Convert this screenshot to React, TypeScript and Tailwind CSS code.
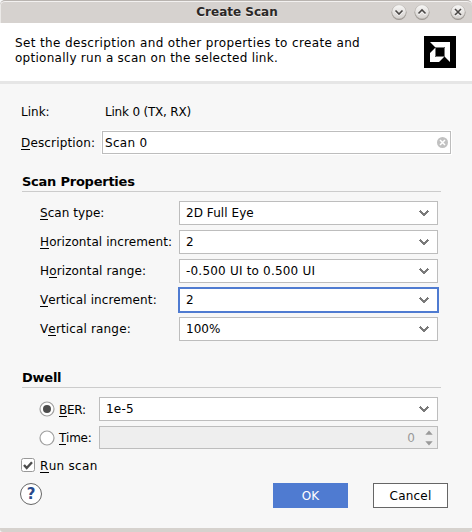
import React from "react";

function Chevron() {
  return (
    <svg className="mr-[8px] shrink-0" width="10" height="6" viewBox="0 0 10 6" shapeRendering="crispEdges">
      <path d="M1 0h1v1h1v1h1v1h2v-1h1v-1h1v-1h1v1h1v1h-1v1h-1v1h-1v1h-1v1h-2v-1h-1v-1h-1v-1h-1v-1h-1v-1h1z" fill="#7a7a7a" />
    </svg>
  );
}

function Combo({ value, focused, className = "", text = "" }: { value: string; focused?: boolean; className?: string; text?: string }) {
  return (
    <div
      className={`flex shrink-0 items-center justify-between bg-white ${
        focused ? "-mx-px h-[26px] border-2 border-[#4f7bd1] pl-[6px]" : "h-[24px] border border-[#bdbdbd] pl-[6px]"
      } ${className}`}
    >
      <span className={`leading-[22px] ${text}`}>{value}</span>
      <Chevron />
    </div>
  );
}

function U({ children }: { children: React.ReactNode }) {
  return <span className="inline-block h-[14px] border-b border-black leading-[14px]">{children}</span>;
}

function Heading({ children, className }: { children: React.ReactNode; className: string }) {
  return (
    <div className={`ml-[22px] w-[419px] border-b border-[#cccccc] text-[13px] font-bold leading-[18px] tracking-[-0.24px] ${className}`}>
      {children}
    </div>
  );
}

function WindowButton({ d }: { d: string }) {
  return (
    <svg width="16" height="16" viewBox="0 0 16 16">
      <defs>
        <linearGradient id="knob" x1="0" y1="0" x2="0" y2="1">
          <stop offset="0" stopColor="#f8f7f6" />
          <stop offset="1" stopColor="#d5d1ce" />
        </linearGradient>
      </defs>
      <circle cx="8" cy="8.4" r="7.5" fill="#99948f" />
      <circle cx="8" cy="7.8" r="7" fill="url(#knob)" stroke="#bdb8b4" strokeWidth=".5" />
      <path d={d} fill="none" stroke="#fff" strokeWidth="1.5" transform="translate(0 1)" />
      <path d={d} fill="none" stroke="#4a4745" strokeWidth="1.6" />
    </svg>
  );
}

function Radio({ checked }: { checked?: boolean }) {
  return (
    <svg className="shrink-0" width="16" height="16" viewBox="0 0 16 16">
      <circle cx="8" cy="8" r="7" fill="#fff" stroke="#a0a0a0" strokeWidth="1.2" />
      {checked && <circle cx="8" cy="8" r="4" fill="#4d4d4d" />}
    </svg>
  );
}

export default function App() {
  return (
    <div className="flex h-[532px] w-[472px] flex-col overflow-hidden bg-[#f7f7f7] font-['DejaVu_Sans',sans-serif] text-[12px] text-black whitespace-nowrap">
      <div className="relative flex h-[23px] shrink-0 items-center justify-center rounded-t-[5px] border-t border-[#b9b4b0] bg-[#d6d2cf] shadow-[inset_0_1px_0_#f3f1f0,inset_1px_0_0_#eceae8]">
        <span className="pl-[2px] text-[12px] font-bold text-[#2b2827] [text-shadow:0_1px_0_#efedec]">Create Scan</span>
        <div className="absolute top-[3px] right-[6px] flex">
          <WindowButton d="M4.5 6.5l3.5 3.5 3.5-3.5" />
          <div className="w-[7px]" />
          <WindowButton d="M4.5 9.5l3.5-3.5 3.5 3.5" />
          <div className="w-[20px]" />
          <WindowButton d="M5 5l6 6M11 5l-6 6" />
        </div>
      </div>

      <div className="flex h-[58px] shrink-0 justify-between bg-white pl-[15px] pr-[16px] pt-[13px]">
        <p className="leading-[15px]">
          <span className="tracking-[0.37px]">Set the description and other properties to create and</span>
          <br />
          <span className="tracking-[0.27px]">optionally run a scan on the selected link.</span>
        </p>
        <svg width="32" height="32" viewBox="0 0 32 32">
          <path d="M0 0h32v32H0z" fill="#000" />
          <path d="M6 6h20v20l-5-5v-10h-10z" fill="#fff" />
          <path d="M11 12v9h9l-5 5H6v-9z" fill="#fff" />
          <path d="M11.5 11.5h9v9h-9z" fill="none" stroke="#777" strokeWidth="1" />
        </svg>
      </div>
      <div className="h-[3px] shrink-0 bg-[#e6e6e6]" />

      <div className="flex min-h-0 flex-1 flex-col">
        <div className="mt-[20px] flex h-[16px] pl-[21px] leading-[16px]">
          <span className="w-[84px]">Link:</span>
          <span className="tracking-[-0.2px]">Link 0 (TX, RX)</span>
        </div>
        <div className="mt-[11px] flex h-[23px] items-center pl-[21px]">
          <span className="w-[81px] tracking-[0.16px]"><U>D</U>escription:</span>
          <div className="flex h-[23px] w-[349px] items-center justify-between border border-[#bdbdbd] bg-white pl-[2px] pr-[2px] shadow-[0_0_0_1px_#ffffff]">
            <span className="tracking-[0.28px]">Scan 0</span>
            <svg width="11" height="11" viewBox="0 0 11 11">
              <circle cx="5.5" cy="5.5" r="5.5" fill="#c1c1c1" />
              <path d="M3 3l5 5M8 3l-5 5" stroke="#fff" strokeWidth="1.5" />
            </svg>
          </div>
        </div>

        <Heading className="mt-[19px]">Scan Properties</Heading>

        <div className="mt-[9px] flex flex-col gap-[5px] pl-[40px]">
          <div className="flex h-[24px] items-center">
            <span className="w-[139px] tracking-[0.06px]"><U>S</U>can type:</span>
            <Combo value="2D Full Eye" className="w-[259px]" text="tracking-[0.06px]" />
          </div>
          <div className="flex h-[24px] items-center">
            <span className="w-[139px] tracking-[0.1px]"><U>H</U>orizontal increment:</span>
            <Combo value="2" className="w-[259px]" />
          </div>
          <div className="flex h-[24px] items-center">
            <span className="w-[139px] tracking-[0.13px]">H<U>o</U>rizontal range:</span>
            <Combo value="-0.500 UI to 0.500 UI" className="w-[259px]" text="tracking-[0.2px]" />
          </div>
          <div className="flex h-[24px] items-center">
            <span className="w-[139px] tracking-[0.11px]"><U>V</U>ertical increment:</span>
            <Combo value="2" focused className="w-[261px]" />
          </div>
          <div className="flex h-[24px] items-center">
            <span className="w-[139px] tracking-[0.15px]">V<U>e</U>rtical range:</span>
            <Combo value="100%" className="w-[259px]" />
          </div>
        </div>

        <Heading className="mt-[28px]">Dwell</Heading>

        <div className="mt-[9px] flex h-[24px] items-center pl-[39px]">
          <Radio checked />
          <span className="ml-[4px] w-[40px] pt-px tracking-[-0.3px]"><U>B</U>ER:</span>
          <Combo value="1e-5" className="w-[339px]" text="tracking-[0.2px]" />
        </div>
        <div className="mt-[5px] flex h-[23px] items-center pl-[39px]">
          <Radio />
          <span className="ml-[4px] w-[40px] tracking-[-0.25px]"><U>T</U>ime:</span>
          <div className="flex h-[23px] w-[339px] items-center justify-end border border-[#bdbdbd] bg-[#eeeeee] pr-[4px] text-[#999999]">
            <span>0</span>
            <svg className="ml-[10px]" width="8" height="16" viewBox="0 0 8 16">
              <path d="M4 0.5l3.7 4.2H.3zM4 15.5l3.7-4.2H.3z" fill="#999" />
            </svg>
          </div>
        </div>

        <div className="mt-[9px] flex h-[14px] items-center pl-[21px]">
          <svg width="14" height="14" viewBox="0 0 14 14">
            <rect x=".5" y=".5" width="13" height="13" rx="2" fill="#fff" stroke="#999" />
            <path d="M3 7l2.7 3L11 4.2" fill="none" stroke="#4d4d4d" strokeWidth="2.4" />
          </svg>
          <span className="ml-[5px] pt-px tracking-[0.3px]"><U>R</U>un scan</span>
        </div>

        <div className="mt-[11px] flex h-[25px] pl-[20px]">
          <div className="flex h-[22px] w-[22px] items-center justify-center rounded-full border border-[#666666] bg-white text-[15px] font-bold text-[#294a8c]">?</div>
          <button className="ml-[231px] h-[25px] w-[75px] bg-[#4f7bd1] text-white">OK</button>
          <button className="ml-[25px] h-[25px] w-[75px] border border-[#666666] bg-white tracking-[0.2px]">Cancel</button>
        </div>
      </div>
      <div className="h-[4px] shrink-0 rounded-b-[3px] bg-[#d6d2ce]" />
    </div>
  );
}
